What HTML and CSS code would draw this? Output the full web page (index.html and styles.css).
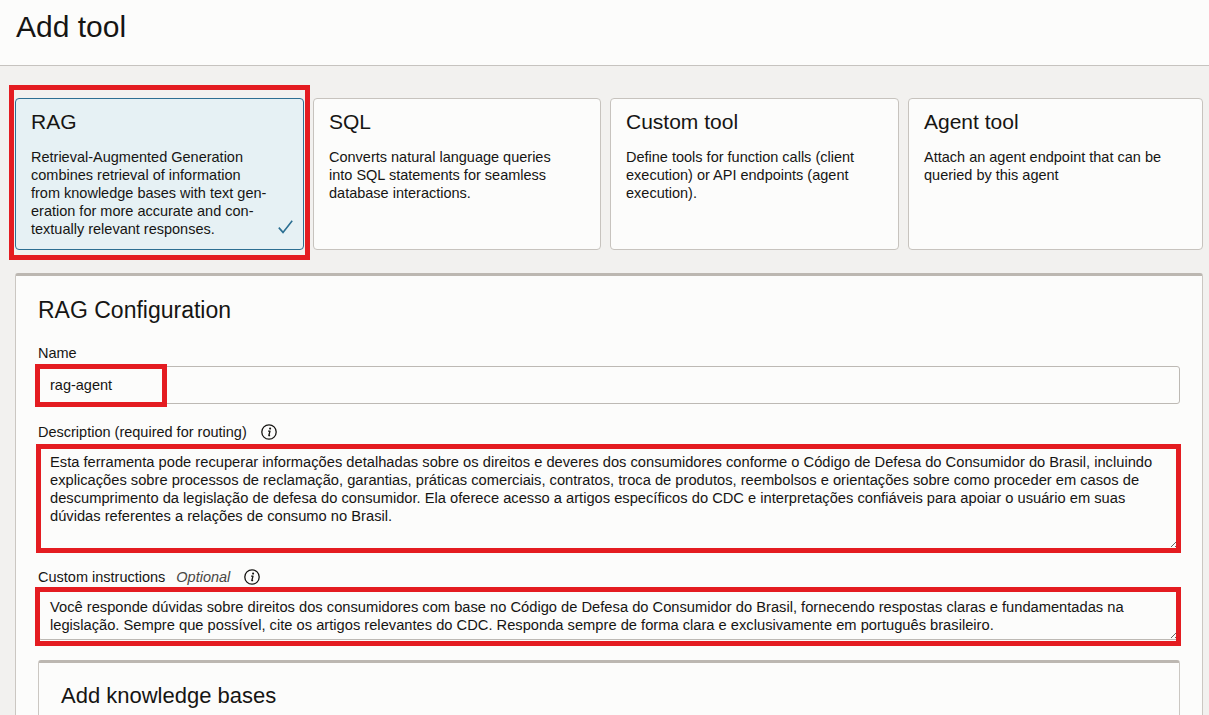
FILE: index.html
```html
<!DOCTYPE html>
<html lang="en">
<head>
<meta charset="utf-8">
<title>Add tool</title>
<link rel="stylesheet" href="styles.css">
</head>
<body>
<header class="page-header">
  <h1 class="page-title">Add tool</h1>
</header>
<main class="page-content">
  <div class="tool-grid">
    <div class="tool-card is-selected">
      <h2 class="tool-title">RAG</h2>
      <p class="tool-desc">Retrieval-Augmented Generation combines retrieval of information from knowledge bases with text gen&shy;eration for more accurate and con&shy;textually relevant responses.</p>
      <svg class="tool-check" width="15" height="14" viewBox="0 0 15 14" aria-hidden="true"><polyline points="0.8,7.6 5,12.4 14.2,0.8" fill="none" stroke="currentColor" stroke-width="1.6"/></svg>
      <span class="annot annot-card"></span>
    </div>
    <div class="tool-card">
      <h2 class="tool-title">SQL</h2>
      <p class="tool-desc">Converts natural language queries into SQL statements for seamless database interactions.</p>
    </div>
    <div class="tool-card">
      <h2 class="tool-title">Custom tool</h2>
      <p class="tool-desc">Define tools for function calls (client execution) or API endpoints (agent execution).</p>
    </div>
    <div class="tool-card">
      <h2 class="tool-title">Agent tool</h2>
      <p class="tool-desc">Attach an agent endpoint that can be queried by this agent</p>
    </div>
  </div>

  <section class="config-panel">
    <h2 class="panel-title">RAG Configuration</h2>

    <div class="field field-first">
      <label class="field-label" for="name">Name</label>
      <div class="control-wrap">
        <input class="text-input" id="name" type="text" value="rag-agent">
        <span class="annot annot-name"></span>
      </div>
    </div>

    <div class="field">
      <label class="field-label" for="desc">Description (required for routing)
        <svg class="info-icon" width="16" height="16" viewBox="0 0 16 16" aria-hidden="true"><circle cx="8" cy="8" r="7.2" fill="none" stroke="currentColor" stroke-width="1.3"/><circle cx="9.1" cy="4.6" r="1.05" fill="currentColor"/><path d="M7.1 7.1h1.9l-1.2 4.4h1.3" fill="none" stroke="currentColor" stroke-width="1.3" stroke-linejoin="round"/></svg>
      </label>
      <div class="control-wrap">
        <textarea class="text-area area-desc" id="desc" wrap="off">Esta ferramenta pode recuperar informações detalhadas sobre os direitos e deveres dos consumidores conforme o Código de Defesa do Consumidor do Brasil, incluindo
explicações sobre processos de reclamação, garantias, práticas comerciais, contratos, troca de produtos, reembolsos e orientações sobre como proceder em casos de
descumprimento da legislação de defesa do consumidor. Ela oferece acesso a artigos específicos do CDC e interpretações confiáveis para apoiar o usuário em suas
dúvidas referentes a relações de consumo no Brasil.</textarea>
        <span class="annot annot-desc"></span>
      </div>
    </div>

    <div class="field">
      <label class="field-label" for="instr">Custom instructions <em class="optional">Optional</em>
        <svg class="info-icon" width="16" height="16" viewBox="0 0 16 16" aria-hidden="true"><circle cx="8" cy="8" r="7.2" fill="none" stroke="currentColor" stroke-width="1.3"/><circle cx="9.1" cy="4.6" r="1.05" fill="currentColor"/><path d="M7.1 7.1h1.9l-1.2 4.4h1.3" fill="none" stroke="currentColor" stroke-width="1.3" stroke-linejoin="round"/></svg>
      </label>
      <div class="control-wrap">
        <textarea class="text-area area-instr" id="instr" wrap="off">Você responde dúvidas sobre direitos dos consumidores com base no Código de Defesa do Consumidor do Brasil, fornecendo respostas claras e fundamentadas na
legislação. Sempre que possível, cite os artigos relevantes do CDC. Responda sempre de forma clara e exclusivamente em português brasileiro.</textarea>
        <span class="annot annot-instr"></span>
      </div>
    </div>

    <section class="kb-panel">
      <h3 class="kb-title">Add knowledge bases</h3>
    </section>
  </section>
</main>
</body>
</html>
```

FILE: styles.css
```css
* { box-sizing: border-box; }

html, body {
  height: 100%;
  overflow: hidden;
}

body {
  margin: 0;
  background: #f2f1ef;
  color: #161513;
  font-family: "Liberation Sans", Arial, sans-serif;
  font-size: 14.5px;
  line-height: 18px;
}

.page-header {
  height: 66px;
  background: #fcfcfb;
  border-bottom: 1px solid #c6c3bf;
  padding: 9px 16px 0;
}

.page-title {
  margin: 0;
  font-size: 30px;
  line-height: 36px;
  font-weight: normal;
}

.page-content {
  padding: 32px 6px 0 15px;
}

.tool-grid {
  display: grid;
  grid-template-columns: 289px 288px 289px 1fr;
  gap: 9px;
}

.tool-card {
  position: relative;
  background: #fcfcfb;
  border: 1px solid #c7c3be;
  border-radius: 4px;
  padding: 11px 32px 11px 15px;
  min-height: 152px;
}

.tool-card.is-selected {
  background: #e6f1f4;
  border-color: #2d6f92;
}

.tool-title {
  margin: 0;
  font-size: 21px;
  line-height: 24px;
  font-weight: normal;
}

.tool-desc {
  margin: 14px 0 0;
  hyphens: manual;
}

.tool-check {
  position: absolute;
  right: 10px;
  bottom: 15px;
  color: #2b6f92;
}

.annot {
  position: absolute;
  border: 5px solid #e41c21;
  pointer-events: none;
}

.annot-card {
  left: -7px;
  top: -14px;
  right: -7px;
  bottom: -11px;
}

.config-panel {
  margin-top: 23px;
  background: #fcfcfb;
  border: 1px solid #cbc7c2;
  border-top: 3px solid #bcb7b1;
  border-radius: 3px 3px 0 0;
  padding: 20px 22px 0;
}

.panel-title {
  margin: 0;
  font-size: 23px;
  line-height: 28px;
  font-weight: normal;
}

.field {
  margin-top: 19px;
}

.field-first {
  margin-top: 20px;
}

.field-label {
  display: flex;
  align-items: center;
  height: 18px;
  margin-bottom: 4px;
}

.optional {
  margin-left: 11px;
  color: #4a4845;
}

.info-icon {
  margin-left: 14px;
  color: #161513;
}

.control-wrap {
  position: relative;
}

.text-input,
.text-area {
  display: block;
  width: 100%;
  margin: 0;
  background: #fcfcfb;
  border: 1px solid #bdb9b4;
  border-radius: 3px;
  color: #161513;
  font-family: "Liberation Sans", Arial, sans-serif;
  font-size: 14.5px;
  line-height: 18px;
}

.text-input {
  height: 38px;
  padding: 0 11px;
}

.text-area {
  padding: 7px 11px;
  font-size: 14.7px;
  overflow: hidden;
  resize: vertical;
  white-space: pre;
}

.area-desc { height: 104px; }
.area-instr { height: 50px; }

.annot-name {
  left: -3px;
  top: -2px;
  width: 132px;
  height: 43px;
}

.annot-desc {
  left: -2px;
  right: -1px;
  top: -1px;
  bottom: -4px;
}

.annot-instr {
  left: -3px;
  right: -1px;
  top: -3px;
  bottom: -6px;
}

.kb-panel {
  margin-top: 20px;
  min-height: 220px;
  border: 1px solid #cbc7c2;
  border-top: 3px solid #bcb7b1;
  border-radius: 3px 3px 0 0;
  padding: 19px 22px 0;
}

.kb-title {
  margin: 0;
  font-size: 22px;
  line-height: 28px;
  font-weight: normal;
}
```
